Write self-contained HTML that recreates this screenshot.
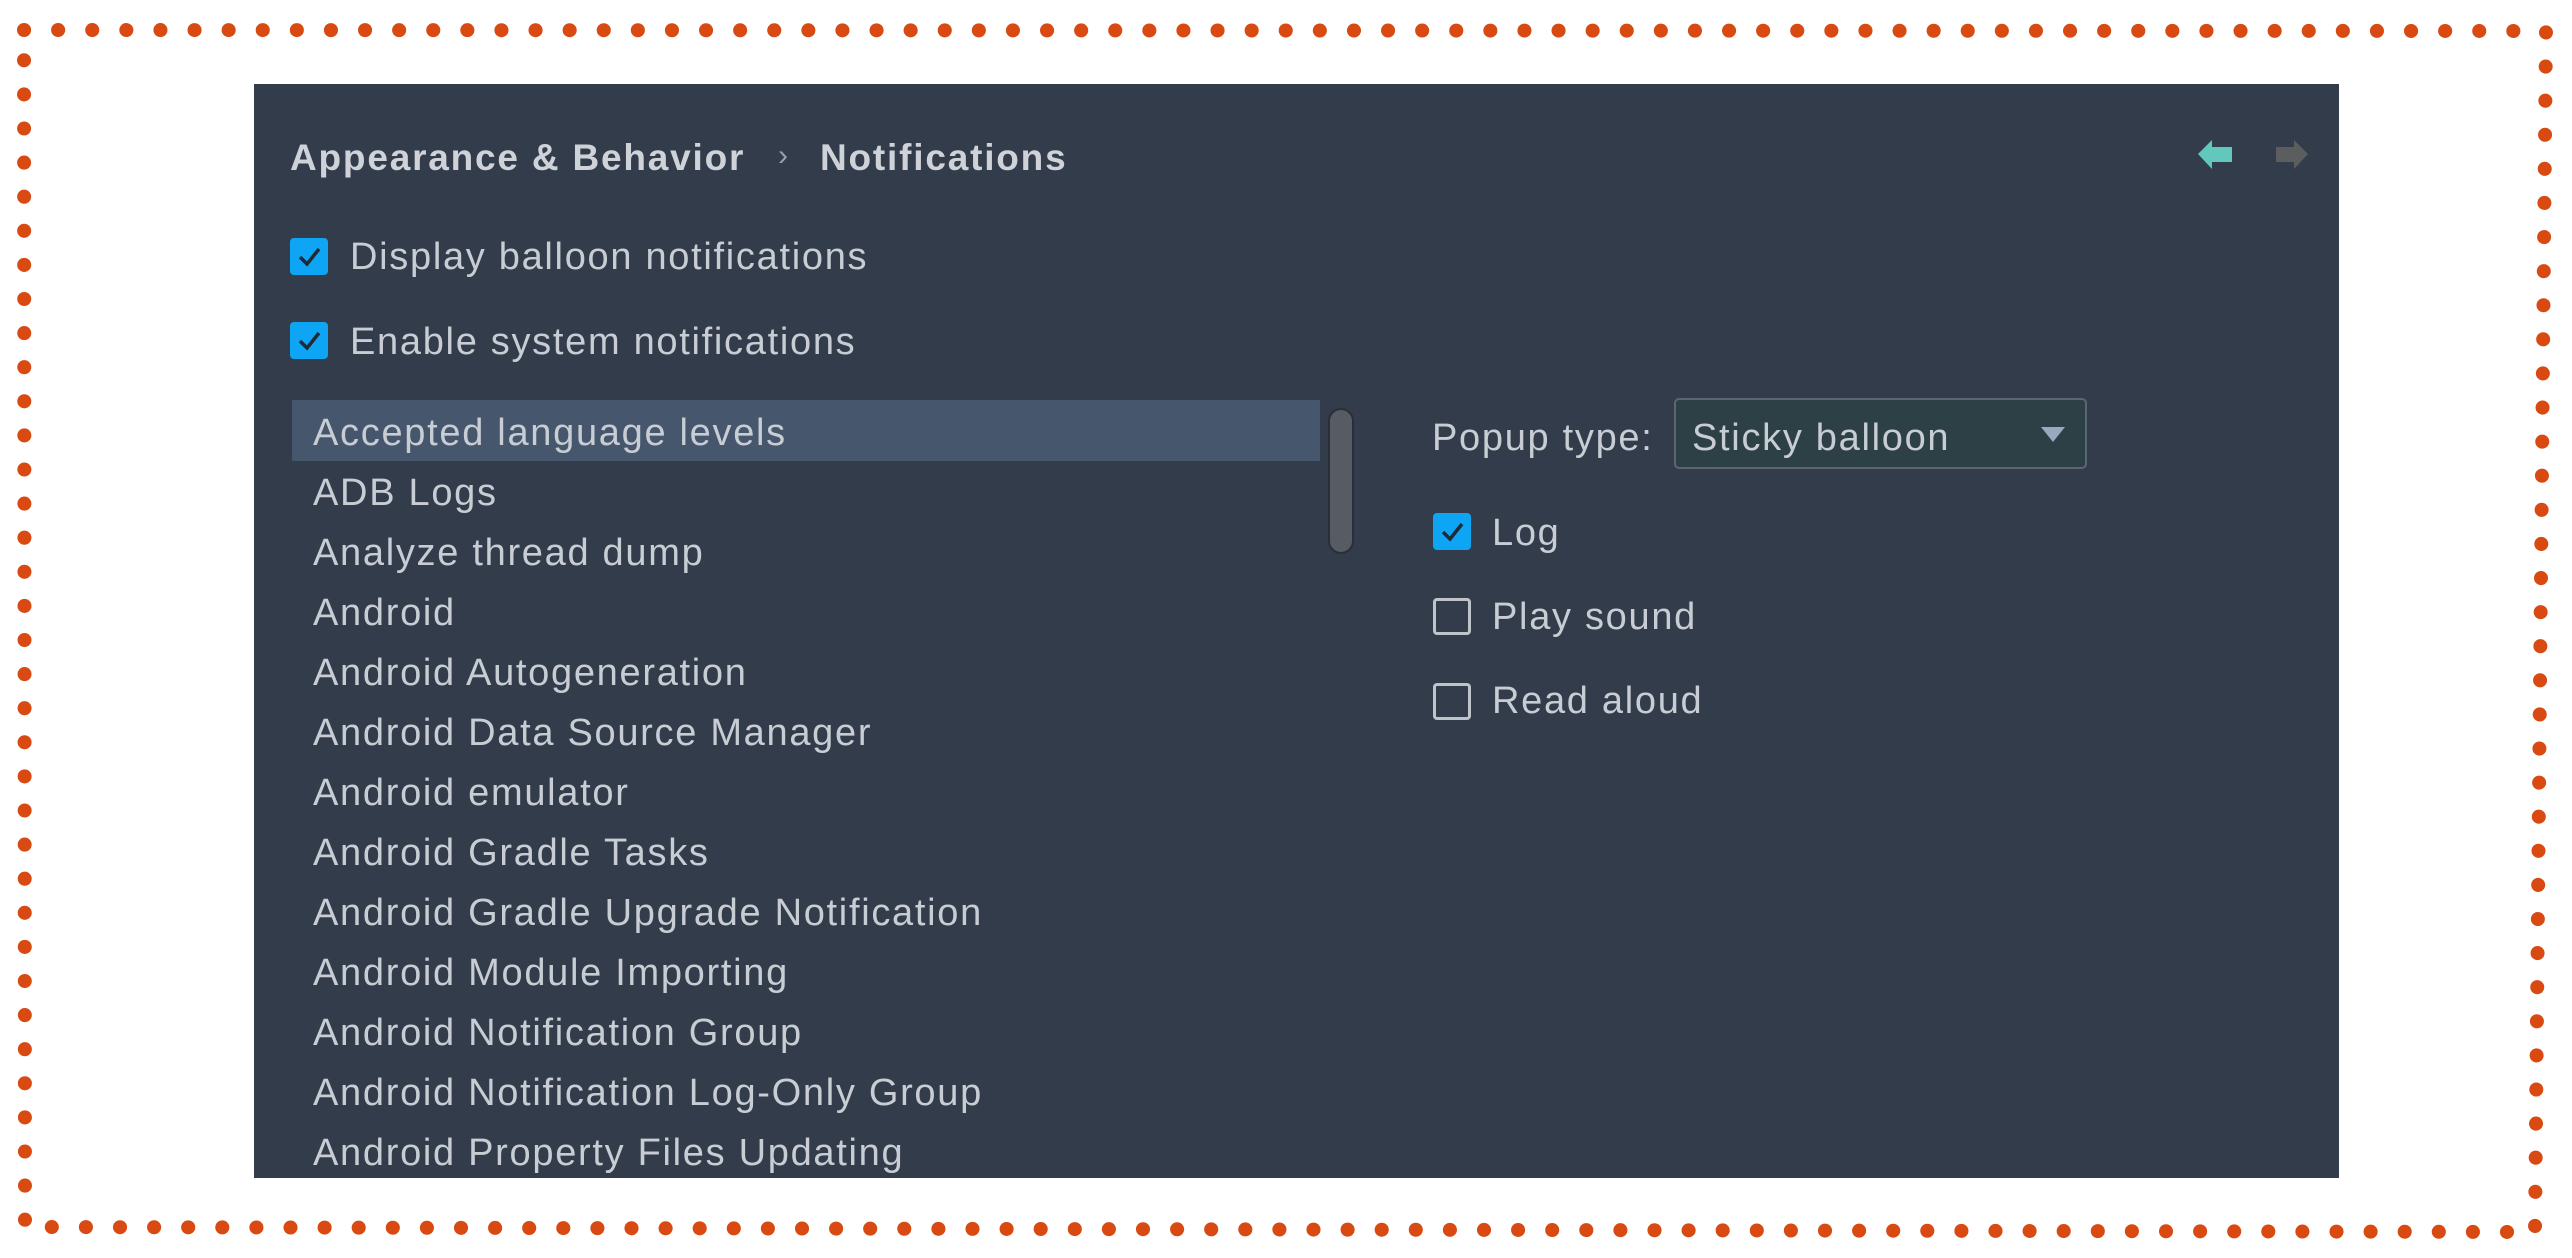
<!DOCTYPE html>
<html><head><meta charset="utf-8"><style>
*{margin:0;padding:0;box-sizing:border-box}
html,body{width:2572px;height:1258px;background:#fff;overflow:hidden}
body{position:relative;font-family:"Liberation Sans",sans-serif}
.panel{position:absolute;left:254px;top:84px;width:2085px;height:1094px;background:#323c4a}
.t{position:absolute;font-size:38px;letter-spacing:1.7px;color:#c8cdd4;white-space:nowrap;line-height:44px;height:44px;margin-top:2px}
.b{font-weight:bold;color:#cfd3d9;font-size:37px;letter-spacing:1.8px}
.cb{position:absolute;width:38px;height:37px;background:#0ea5f4;border-radius:4px}
.cb svg{position:absolute;left:0;top:0}
.ub{position:absolute;width:38px;height:37px;border:3px solid #bfc4cb;border-radius:4px}
.sel{position:absolute;left:292px;top:400px;width:1028px;height:61px;background:#45566d}
.sb{position:absolute;left:1328px;top:408px;width:26px;height:146px;background:#575c64;border:2px solid #2a2f37;border-radius:13px}
.dd{position:absolute;left:1674px;top:398px;width:413px;height:71px;background:#2c4046;border:2px solid #5b666e;border-radius:5px}
</style></head><body>
<svg width="2572" height="1258" style="position:absolute;left:0;top:0">
<polygon points="24,30 2546,31 2535,1232 25,1227" fill="none" stroke="#d84a12" stroke-width="14" stroke-dasharray="0.1 34" stroke-linecap="round"/>
</svg>
<div class="panel"></div>
<div class="t b" style="left:290px;top:134px">Appearance &amp; Behavior</div>
<div class="t" style="left:778px;top:132px;color:#9aa0a8;font-size:30px">›</div>
<div class="t b" style="left:820px;top:134px">Notifications</div>
<svg width="140" height="40" style="position:absolute;left:2195px;top:136px">
<polygon points="3,18 17,4 17,11 37,11 37,26 17,26 17,33" fill="#62c7bc"/>
<polygon points="113,18 99,4 99,11 81,11 81,26 99,26 99,33" fill="#5c5d5f"/>
</svg>
<div class="cb" style="left:290px;top:238px"><svg width="38" height="37"><path d="M10 19 L17 26 L29 11" fill="none" stroke="#1f2a36" stroke-width="3.5"/></svg></div>
<div class="t" style="left:350px;top:233px">Display balloon notifications</div>
<div class="cb" style="left:290px;top:322px"><svg width="38" height="37"><path d="M10 19 L17 26 L29 11" fill="none" stroke="#1f2a36" stroke-width="3.5"/></svg></div>
<div class="t" style="left:350px;top:318px">Enable system notifications</div>
<div class="sel"></div>
<div class="sb"></div>
<div class="t" style="left:313px;top:409px">Accepted language levels</div>
<div class="t" style="left:313px;top:469px">ADB Logs</div>
<div class="t" style="left:313px;top:529px">Analyze thread dump</div>
<div class="t" style="left:313px;top:589px">Android</div>
<div class="t" style="left:313px;top:649px">Android Autogeneration</div>
<div class="t" style="left:313px;top:709px">Android Data Source Manager</div>
<div class="t" style="left:313px;top:769px">Android emulator</div>
<div class="t" style="left:313px;top:829px">Android Gradle Tasks</div>
<div class="t" style="left:313px;top:889px">Android Gradle Upgrade Notification</div>
<div class="t" style="left:313px;top:949px">Android Module Importing</div>
<div class="t" style="left:313px;top:1009px">Android Notification Group</div>
<div class="t" style="left:313px;top:1069px">Android Notification Log-Only Group</div>
<div class="t" style="left:313px;top:1129px">Android Property Files Updating</div>
<div class="t" style="left:1432px;top:414px">Popup type:</div>
<div class="dd"></div>
<div class="t" style="left:1692px;top:414px">Sticky balloon</div>
<svg width="24" height="16" style="position:absolute;left:2041px;top:427px"><polygon points="0,0 24,0 12,15" fill="#9aa8c0"/></svg>
<div class="cb" style="left:1433px;top:513px"><svg width="38" height="37"><path d="M10 19 L17 26 L29 11" fill="none" stroke="#1f2a36" stroke-width="3.5"/></svg></div>
<div class="t" style="left:1492px;top:509px">Log</div>
<div class="ub" style="left:1433px;top:598px"></div>
<div class="t" style="left:1492px;top:593px">Play sound</div>
<div class="ub" style="left:1433px;top:683px"></div>
<div class="t" style="left:1492px;top:677px">Read aloud</div>
</body></html>
